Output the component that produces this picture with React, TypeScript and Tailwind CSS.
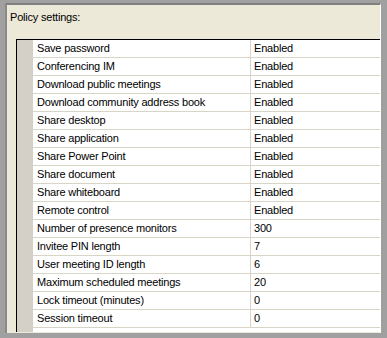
const rows: [string, string][] = [
  ["Save password", "Enabled"],
  ["Conferencing IM", "Enabled"],
  ["Download public meetings", "Enabled"],
  ["Download community address book", "Enabled"],
  ["Share desktop", "Enabled"],
  ["Share application", "Enabled"],
  ["Share Power Point", "Enabled"],
  ["Share document", "Enabled"],
  ["Share whiteboard", "Enabled"],
  ["Remote control", "Enabled"],
  ["Number of presence monitors", "300"],
  ["Invitee PIN length", "7"],
  ["User meeting ID length", "6"],
  ["Maximum scheduled meetings", "20"],
  ["Lock timeout (minutes)", "0"],
  ["Session timeout", "0"],
];

export default function App() {
  return (
    <div
      className="h-[338px] w-[387px] bg-[#a0a0a0] pb-[5px] pl-[5px] pr-[6px] pt-[3px] text-[11px] tracking-[-0.2px] text-black"
      style={{ fontFamily: '"Liberation Sans", Arial, sans-serif' }}
    >
      <div className="flex h-full flex-col border-l-2 border-r border-t-2 border-l-[#8a8a8a] border-r-white border-t-[#808080] bg-[#ece9d8]">
        <div className="pl-[3px] pt-[6px] leading-[13px]">Policy settings:</div>
        <div className="ml-[9px] mt-[15px] flex h-[293px] border-l border-t border-black bg-white">
          <div className="w-[16px] shrink-0 bg-[#d4d0c8]" />
          <div className="flex-1">
            {rows.map(([name, value]) => (
              <div
                key={name}
                className="grid h-[18px] grid-cols-[218px_1fr] border-b border-[#d9d5c6] leading-[17px]"
              >
                <div className="border-r border-[#d9d5c6] pl-[4px]">{name}</div>
                <div className="pl-[3px]">{value}</div>
              </div>
            ))}
          </div>
        </div>
      </div>
    </div>
  );
}
